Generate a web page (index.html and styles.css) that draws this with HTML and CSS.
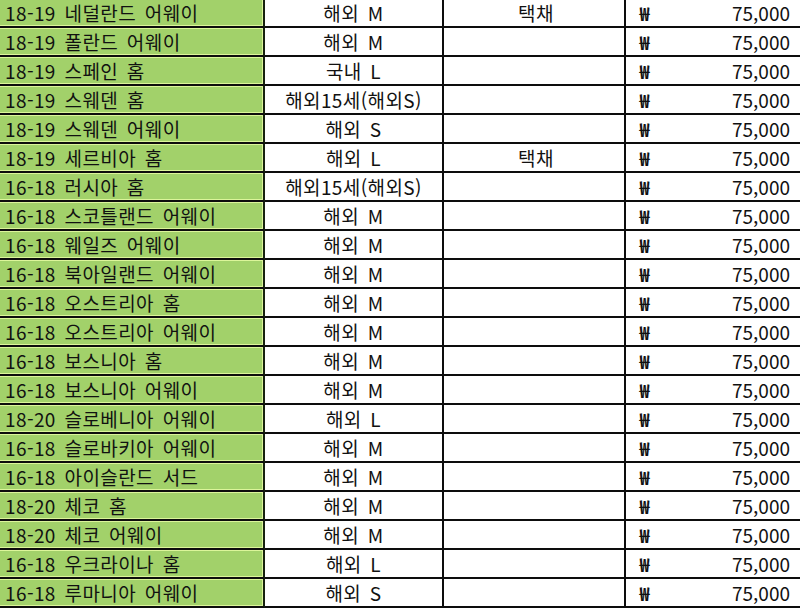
FILE: index.html
```html
<!DOCTYPE html>
<html lang="ko">
<head>
<meta charset="utf-8">
<title>유니폼 목록</title>
<link rel="stylesheet" href="styles.css">
</head>
<body>
<div class="sheet">
  <div class="row"><div class="name">18-19 네덜란드 어웨이</div><div class="size">해외 M</div><div class="ship">택채</div><div class="price"><span class="won">₩</span><span class="amt">75,000</span></div></div>
  <div class="row"><div class="name">18-19 폴란드 어웨이</div><div class="size">해외 M</div><div class="ship"></div><div class="price"><span class="won">₩</span><span class="amt">75,000</span></div></div>
  <div class="row"><div class="name">18-19 스페인 홈</div><div class="size">국내 L</div><div class="ship"></div><div class="price"><span class="won">₩</span><span class="amt">75,000</span></div></div>
  <div class="row"><div class="name">18-19 스웨덴 홈</div><div class="size">해외15세(해외S)</div><div class="ship"></div><div class="price"><span class="won">₩</span><span class="amt">75,000</span></div></div>
  <div class="row"><div class="name">18-19 스웨덴 어웨이</div><div class="size">해외 S</div><div class="ship"></div><div class="price"><span class="won">₩</span><span class="amt">75,000</span></div></div>
  <div class="row"><div class="name">18-19 세르비아 홈</div><div class="size">해외 L</div><div class="ship">택채</div><div class="price"><span class="won">₩</span><span class="amt">75,000</span></div></div>
  <div class="row"><div class="name">16-18 러시아 홈</div><div class="size">해외15세(해외S)</div><div class="ship"></div><div class="price"><span class="won">₩</span><span class="amt">75,000</span></div></div>
  <div class="row"><div class="name">16-18 스코틀랜드 어웨이</div><div class="size">해외 M</div><div class="ship"></div><div class="price"><span class="won">₩</span><span class="amt">75,000</span></div></div>
  <div class="row"><div class="name">16-18 웨일즈 어웨이</div><div class="size">해외 M</div><div class="ship"></div><div class="price"><span class="won">₩</span><span class="amt">75,000</span></div></div>
  <div class="row"><div class="name">16-18 북아일랜드 어웨이</div><div class="size">해외 M</div><div class="ship"></div><div class="price"><span class="won">₩</span><span class="amt">75,000</span></div></div>
  <div class="row"><div class="name">16-18 오스트리아 홈</div><div class="size">해외 M</div><div class="ship"></div><div class="price"><span class="won">₩</span><span class="amt">75,000</span></div></div>
  <div class="row"><div class="name">16-18 오스트리아 어웨이</div><div class="size">해외 M</div><div class="ship"></div><div class="price"><span class="won">₩</span><span class="amt">75,000</span></div></div>
  <div class="row"><div class="name">16-18 보스니아 홈</div><div class="size">해외 M</div><div class="ship"></div><div class="price"><span class="won">₩</span><span class="amt">75,000</span></div></div>
  <div class="row"><div class="name">16-18 보스니아 어웨이</div><div class="size">해외 M</div><div class="ship"></div><div class="price"><span class="won">₩</span><span class="amt">75,000</span></div></div>
  <div class="row"><div class="name">18-20 슬로베니아 어웨이</div><div class="size">해외 L</div><div class="ship"></div><div class="price"><span class="won">₩</span><span class="amt">75,000</span></div></div>
  <div class="row"><div class="name">16-18 슬로바키아 어웨이</div><div class="size">해외 M</div><div class="ship"></div><div class="price"><span class="won">₩</span><span class="amt">75,000</span></div></div>
  <div class="row"><div class="name">16-18 아이슬란드 서드</div><div class="size">해외 M</div><div class="ship"></div><div class="price"><span class="won">₩</span><span class="amt">75,000</span></div></div>
  <div class="row"><div class="name">18-20 체코 홈</div><div class="size">해외 M</div><div class="ship"></div><div class="price"><span class="won">₩</span><span class="amt">75,000</span></div></div>
  <div class="row"><div class="name">18-20 체코 어웨이</div><div class="size">해외 M</div><div class="ship"></div><div class="price"><span class="won">₩</span><span class="amt">75,000</span></div></div>
  <div class="row"><div class="name">16-18 우크라이나 홈</div><div class="size">해외 L</div><div class="ship"></div><div class="price"><span class="won">₩</span><span class="amt">75,000</span></div></div>
  <div class="row"><div class="name">16-18 루마니아 어웨이</div><div class="size">해외 S</div><div class="ship"></div><div class="price"><span class="won">₩</span><span class="amt">75,000</span></div></div>
</div>
</body>
</html>
```

FILE: styles.css
```css
html, body {
  margin: 0;
  padding: 0;
  background: #ffffff;
  overflow: hidden;
}

body {
  font-family: "Noto Sans CJK KR", "Noto Sans", sans-serif;
  font-size: 19px;
  color: #111111;
  letter-spacing: 0.4px;
  word-spacing: 3px;
}

.sheet {
  width: 800px;
  margin-top: -1px;
  display: flex;
  flex-direction: column;
}

.row {
  display: flex;
  height: 29px;
}

.row > div {
  box-sizing: border-box;
  height: 29px;
  line-height: 27px;
  border-bottom: 2px solid #0d0d0d;
  white-space: nowrap;
}

.name {
  width: 265px;
  flex: none;
  padding-left: 5px;
  background: #a2d16a;
  border-right: 2px solid #17220f;
  box-shadow: inset 0 1px 0 #dcf59a, inset 0 -1px 0 #dcf59a, inset -1px 0 0 #dcf59a;
}

.size {
  width: 179px;
  flex: none;
  text-align: center;
  border-right: 2px solid #0d0d0d;
}

.ship {
  width: 182px;
  flex: none;
  text-align: center;
  padding-left: 4px;
  border-right: 2px solid #0d0d0d;
}

.price {
  flex: 1;
  display: flex;
  justify-content: space-between;
  padding-left: 13px;
  padding-right: 10px;
  letter-spacing: 0;
}

.won {
  font-size: 19px;
  font-weight: 700;
  transform: scaleX(0.9);
}
```
